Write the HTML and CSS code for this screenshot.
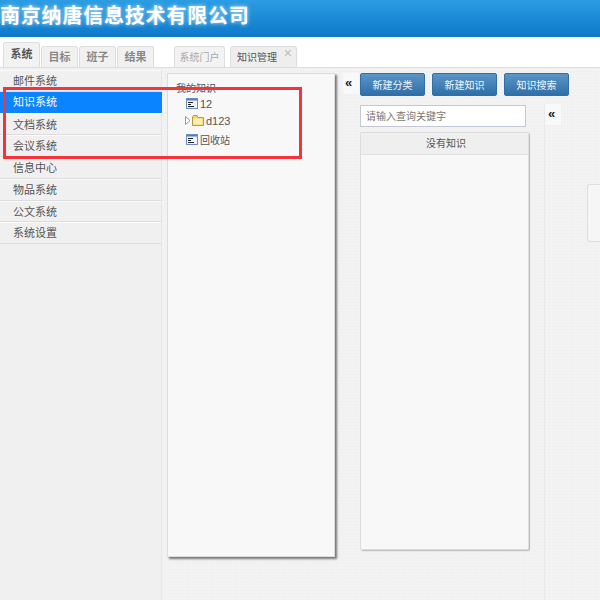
FILE: index.html
```html
<!DOCTYPE html>
<html>

<head>
    <title>南京纳唐信息技术有限公司</title>
    <link rel="stylesheet" href="styles.css">
</head>

<body>
    <div id="header">南京纳唐信息技术有限公司</div>

    <div id="tabbar">
        <div class="side-tabs">
            <div class="side-tab active">系统</div>
            <div class="side-tab">目标</div>
            <div class="side-tab">班子</div>
            <div class="side-tab">结果</div>
        </div>
        <div class="page-tabs">
            <div class="page-tab muted">系统门户</div>
            <div class="page-tab current">知识管理<span class="close">×</span></div>
        </div>
    </div>

    <div id="main">
        <div id="sidebar">
            <div class="menu-item">邮件系统</div>
            <div class="menu-item selected">知识系统</div>
            <div class="menu-item">文档系统</div>
            <div class="menu-item">会议系统</div>
            <div class="menu-item">信息中心</div>
            <div class="menu-item">物品系统</div>
            <div class="menu-item">公文系统</div>
            <div class="menu-item">系统设置</div>
        </div>

        <div id="tree">
            <div class="tree-root">我的知识</div>
            <div class="tree-row">
                <svg class="doc-icon" width="12" height="11" viewBox="0 0 12 11">
                    <rect x="0.5" y="0.5" width="11" height="10" fill="#eef2fa" stroke="#6d8fc0" />
                    <rect x="1" y="1" width="10" height="1.500" fill="#4f7ccb" />
                    <path d="M2 4.500h5M2 6.500h3M2 8.500h6" stroke="#222" fill="none" />
                </svg>
                <span class="latin">12</span>
            </div>
            <div class="tree-row folder-row">
                <svg class="arrow" width="6" height="9" viewBox="0 0 6 9">
                    <path d="M0.500 0.500L5 4.500L0.500 8.500Z" fill="#fff" stroke="#999" />
                </svg>
                <svg class="folder" width="12" height="11" viewBox="0 0 12 11">
                    <path d="M0.500 2V10.500H11.500V2.500H6L5 0.500H1.500Z" fill="#f7d56c" stroke="#b59a45" />
                    <rect x="1.500" y="3.500" width="9" height="6" fill="#fdeeb0" />
                </svg>
                <span class="latin">d123</span>
            </div>
            <div class="tree-row bin-row">
                <svg class="doc-icon" width="12" height="11" viewBox="0 0 12 11">
                    <rect x="0.5" y="0.5" width="11" height="10" fill="#eef2fa" stroke="#6d8fc0" />
                    <rect x="1" y="1" width="10" height="1.500" fill="#4f7ccb" />
                    <path d="M2 4.500h5M2 6.500h3M2 8.500h6" stroke="#222" fill="none" />
                </svg>
                <span>回收站</span>
            </div>
        </div>

        <div class="collapse first">«</div>

        <div id="knowledge">
            <div class="actions">
                <button>新建分类</button>
                <button>新建知识</button>
                <button>知识搜索</button>
            </div>
            <input class="search" type="text" placeholder="请输入查询关键字">
            <div class="list">
                <div class="list-head">没有知识</div>
            </div>
        </div>

        <div id="detail">
            <div class="collapse second">«</div>
            <div class="handle"></div>
        </div>
    </div>

    <div class="red-box"></div>
</body>

</html>
```

FILE: styles.css
```css
* {
    box-sizing: border-box;
}

body {
    margin: 0;
    width: 600px;
    height: 600px;
    overflow: hidden;
    background-color: #fff;
    color: #555;
    font-family: "Liberation Sans", "Noto Sans CJK SC", sans-serif;
    font-size: 10px;
}

#header {
    height: 37px;
    background: linear-gradient(#2b9de3, #0d78c9);
    color: #fff;
    font-family: "Noto Sans CJK SC", sans-serif;
    font-size: 20px;
    font-weight: bold;
    line-height: 30px;
    letter-spacing: 0.8px;
    text-shadow: 0 0 4px #cfe9fb;
    white-space: nowrap;
}

#tabbar {
    display: flex;
    height: 31px;
    background-color: #fff;
    border-bottom: 1px solid #ddd;
}

.side-tabs {
    display: flex;
    align-items: flex-end;
    width: 174px;
    padding-left: 3px;
    gap: 1px;
}

.side-tab {
    width: 37px;
    height: 21px;
    border: 1px solid #ddd;
    border-bottom: none;
    border-radius: 3px 3px 0 0;
    background-color: #f1f1f1;
    color: #888;
    font-size: 11px;
    font-weight: bold;
    line-height: 20px;
    text-align: center;
}

.side-tab.active {
    height: 25px;
    background-color: #f2f2f2;
    color: #555;
    line-height: 23px;
}

.page-tabs {
    display: flex;
    align-items: flex-end;
    gap: 5px;
}

.page-tab {
    position: relative;
    height: 21px;
    border: 1px solid #ddd;
    border-bottom: none;
    border-radius: 3px 3px 0 0;
    background-color: #f3f3f3;
    font-size: 10px;
    line-height: 22px;
}

.page-tab.muted {
    width: 51px;
    color: #aaa;
    text-align: center;
}

.page-tab.current {
    width: 67px;
    padding-left: 6px;
    background-color: #eee;
    color: #555;
}

.close {
    position: absolute;
    top: -5px;
    right: 4px;
    color: #bbb;
    font-size: 14px;
}

#main {
    display: flex;
    height: 532px;
    background-color: #f3f3f3;
    background-image:
        repeating-linear-gradient(0deg, rgba(0, 0, 0, 0.008) 0 1px, transparent 1px 3px),
        repeating-linear-gradient(90deg, rgba(0, 0, 0, 0.008) 0 1px, transparent 1px 3px);
}

#sidebar {
    flex: none;
    width: 162px;
    padding-top: 2px;
    background-color: #f0f0f0;
    border-right: 1px solid #e6e6e6;
}

.menu-item {
    height: 21.75px;
    padding-left: 13px;
    border-bottom: 1px solid #ddd;
    box-shadow: inset 0 1px 0 #fafafa;
    font-size: 11px;
    line-height: 22px;
}

.menu-item.selected {
    margin-right: -1px;
    background-color: #0a84ff;
    border-bottom-color: #fff;
    box-shadow: none;
    color: #fff;
    line-height: 21px;
}

#tree {
    flex: none;
    width: 168px;
    height: 484px;
    margin: 5px 0 0 5px;
    padding: 7px 8px 0;
    background-color: #f8f8f8;
    border: 1px solid #ddd;
    box-shadow: 2px 2px 2px #777;
}

.tree-root {
    height: 14px;
    line-height: 15px;
}

.tree-row {
    display: flex;
    align-items: center;
    height: 17px;
    padding-left: 10px;
    gap: 2px;
    font-size: 10px;
}

.latin {
    font-size: 11px;
}

.folder-row {
    padding-left: 9px;
    gap: 1px;
}

.folder {
    margin-right: 1px;
}

.bin-row {
    height: 20px;
    padding-top: 1px;
}

.collapse {
    flex: none;
    width: 16px;
    height: 21px;
    padding-left: 2px;
    background-color: #f9f9f9;
    color: #123;
    font-size: 13px;
    font-weight: bold;
    line-height: 19px;
}

.collapse.first {
    margin: 5px 0 0 8px;
}

.collapse.second {
    padding-left: 3px;
}

#knowledge {
    flex: none;
    width: 209px;
    margin: 5px 0 0 1px;
}

.actions {
    display: flex;
    gap: 7px;
}

.actions button {
    width: 65px;
    height: 23px;
    padding: 0;
    border: 1px solid #2f6ea6;
    border-radius: 2px;
    background: linear-gradient(#5a96c6, #2f6fa8);
    color: #f2f6fa;
    font-family: inherit;
    font-size: 10px;
}

.search {
    display: block;
    width: 166px;
    height: 22px;
    margin-top: 9px;
    padding: 0 5px;
    border: 1px solid #c3c8d8;
    background-color: #fff;
    font-family: inherit;
    font-size: 10px;
}

.search::placeholder {
    color: #777;
}

.list {
    width: 169px;
    height: 418px;
    margin-top: 5px;
    background-color: #f8f8f8;
    border: 1px solid #ddd;
    border-radius: 2px;
    box-shadow: 1px 1px 1px #bbb;
}

.list-head {
    height: 22px;
    padding-left: 3px;
    background-color: #efefef;
    border-bottom: 1px solid #e2e2e2;
    line-height: 22px;
    text-align: center;
}

#detail {
    position: relative;
    flex: 1;
    margin: 36px 0 0 -25px;
    border-left: 1px solid #e9e9e9;
}

.handle {
    position: absolute;
    top: 80px;
    right: 0;
    width: 13px;
    height: 58px;
    background-color: #f6f6f6;
    border: 1px solid #ddd;
    border-right: none;
    border-radius: 3px 0 0 3px;
}

.red-box {
    position: absolute;
    top: 87px;
    left: 3px;
    width: 299px;
    height: 72px;
    border: 3px solid #f6323a;
}
```
